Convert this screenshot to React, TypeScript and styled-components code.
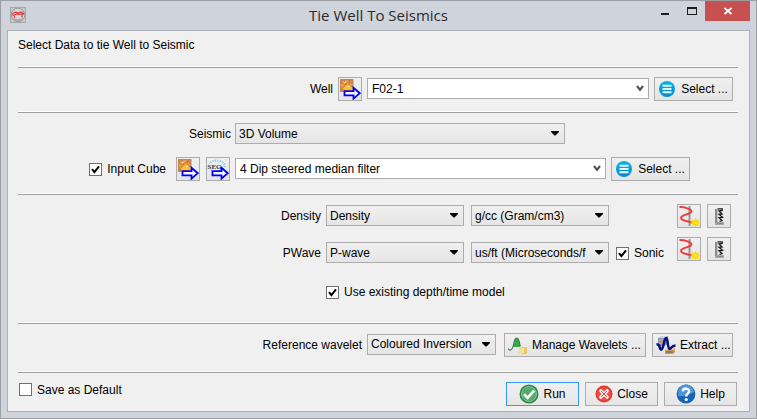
import React, { useId, useState } from "react";
import styled, { createGlobalStyle } from "styled-components";

const GlobalStyle = createGlobalStyle`
  *, *::before, *::after { box-sizing: border-box; }
  body {
    margin: 0;
    background: #cfd4dc;
    color: #000;
    font: 12px/16px "Liberation Sans", Arial, sans-serif;
  }
  button, input, select { font: inherit; color: inherit; margin: 0; }
`;

/* ---------- window frame ---------- */

const Frame = styled.div`
  display: flex;
  flex-direction: column;
  min-height: 100vh;
  padding: 0 6px 6px;
  border: 1px solid #9b9ea5;
  background: #cfd4dc;
`;

const TitleBar = styled.header`
  display: grid;
  grid-template-columns: 1fr auto 1fr;
  height: 29px;
`;

const AppIcon = styled.span`
  padding: 6px 0 0 3px;
  line-height: 0;
`;

const Title = styled.h1`
  margin: 0;
  font: 400 15px/29px "Open Sans", "Noto Sans", sans-serif;
  color: #2b2b2b;
  white-space: nowrap;
`;

const WindowButtons = styled.div`
  display: flex;
  justify-content: flex-end;
`;

const WindowButton = styled.button<{ $close?: boolean }>`
  display: flex;
  align-items: center;
  justify-content: center;
  width: ${(p) => (p.$close ? 45 : 27)}px;
  height: 20px;
  padding: 0;
  border: 0;
  background: ${(p) => (p.$close ? "#c75050" : "transparent")};
`;

const Panel = styled.form`
  flex: 1;
  padding: 0 11px 0 10px;
  border: 1px solid #acafb5;
  background: #f0f0f0;
`;

/* ---------- form layout ---------- */

const Intro = styled.p`
  margin: 0;
  padding: 6px 0 13px;
`;

const Section = styled.section<{ $pad: string }>`
  display: flex;
  flex-direction: column;
  gap: 12px;
  padding: ${(p) => p.$pad};
  border-top: 1px solid #a0a0a0;
  box-shadow: 0 -1px 0 #fff;
  margin-top: 1px;
`;

const Row = styled.div<{ $gap?: number }>`
  display: flex;
  align-items: center;
  gap: ${(p) => p.$gap ?? 5}px;
`;

const Group = styled(Row)`
  flex: 1;
  min-width: 0;
`;

const LabelCell = styled.div<{ $width: number }>`
  flex: 0 0 ${(p) => p.$width}px;
  display: flex;
  justify-content: flex-end;
  white-space: nowrap;
`;

const LogPanel = styled.div`
  display: flex;
  align-items: flex-start;
`;

const LogRows = styled.div`
  flex: 1;
  min-width: 0;
  display: flex;
  flex-direction: column;
  gap: 15px;
  padding-top: 1px;
`;

const LogTools = styled.div`
  display: grid;
  grid-template-columns: auto auto;
  gap: 9px 6px;
`;

const ModelRow = styled.div`
  padding: 8px 0 0 308px;
`;

const Footer = styled.div`
  display: flex;
  align-items: flex-start;
  justify-content: space-between;
`;

/* ---------- controls ---------- */

const Button = styled.button<{ $width: number; $gap?: number; $primary?: boolean; $center?: boolean }>`
  flex: none;
  width: ${(p) => p.$width}px;
  display: flex;
  align-items: center;
  justify-content: ${(p) => (p.$center ? "center" : "flex-start")};
  gap: ${(p) => p.$gap ?? 4}px;
  height: 24px;
  padding: 0 3px;
  border: 1px solid ${(p) => (p.$primary ? "#3399ff" : "#acacac")};
  background: linear-gradient(#f0f0f0, #e5e5e5);
  white-space: nowrap;
  svg { flex: none; }
`;

const IconButton = styled.button`
  flex: none;
  width: 24px;
  height: 24px;
  padding: 0;
  border: 1px solid #acacac;
  background: linear-gradient(#f0f0f0, #e5e5e5);
  line-height: 0;
`;

const ComboFrame = styled.div<{ $width: number; $grow?: boolean; $edit?: boolean }>`
  position: relative;
  flex: ${(p) => (p.$grow ? 1 : 0)} 1 ${(p) => p.$width}px;
  display: flex;
  min-width: 0;
  height: 21px;
  margin-bottom: 1px;
  border: 1px solid ${(p) => (p.$edit ? "#abadb3" : "#acacac")};
  background: ${(p) => (p.$edit ? "#fff" : "linear-gradient(#f0f0f0, #e5e5e5)")};
`;

const ComboArrow = styled.svg`
  position: absolute;
  right: 5px;
  top: 7px;
  pointer-events: none;
`;

const NativeSelect = styled.select`
  appearance: none;
  flex: 1;
  min-width: 0;
  padding: 0 22px 0 3px;
  border: 0;
  background: transparent;
  text-overflow: clip;
`;

const ComboInput = styled.input`
  flex: 1;
  min-width: 0;
  padding: 0 4px;
  border: 0;
  background: transparent;
`;

const ComboDrop = styled.button`
  flex: none;
  width: 16px;
  padding: 0;
  border: 0;
  background: transparent;
  line-height: 0;
`;

const CheckLabel = styled.label`
  display: inline-flex;
  align-items: center;
  gap: 5px;
  position: relative;
  white-space: nowrap;
`;

const CheckBox = styled.input`
  appearance: none;
  width: 13px;
  height: 13px;
  border: 1px solid #707070;
  background: #fff;
  & + svg { display: none; }
  &:checked + svg { display: block; }
`;

const CheckMark = styled.svg`
  position: absolute;
  left: 0;
  pointer-events: none;
`;

function Check({ text, on = false }: { text: string; on?: boolean }) {
  return (
    <CheckLabel>
      <CheckBox type="checkbox" defaultChecked={on} />
      <CheckMark width="13" height="13" viewBox="0 0 13 13">
        <path d="M3 6.2 5.4 9.2 10 3.4" fill="none" stroke="#000" strokeWidth="2" />
      </CheckMark>
      {text}
    </CheckLabel>
  );
}

function Select({ id, label, value, width }: { id?: string; label?: string; value: string; width: number }) {
  return (
    <ComboFrame $width={width}>
      <NativeSelect id={id} aria-label={label} defaultValue={value}>
        <option>{value}</option>
      </NativeSelect>
      <ComboArrow width="8" height="5" viewBox="0 0 8 5">
        <path d="M0 0H8V1L4.5 4.5H3.5L0 1Z" fill="#000" />
      </ComboArrow>
    </ComboFrame>
  );
}

function EditCombo({ id, label, initial, width, grow }: { id?: string; label?: string; initial: string; width: number; grow?: boolean }) {
  const [value, setValue] = useState(initial);
  return (
    <ComboFrame $width={width} $grow={grow} $edit>
      <ComboInput id={id} aria-label={label} value={value} onChange={(e) => setValue(e.target.value)} />
      <ComboDrop type="button" aria-label="Show list">
        <svg width="8" height="7" viewBox="0 0 8 7">
          <path d="M1 1 4 4.8 7 1" fill="none" stroke="#505050" strokeWidth="2.1" />
        </svg>
      </ComboDrop>
    </ComboFrame>
  );
}

/* ---------- icons ---------- */

const BlueArrow = () => (
  <path d="M5.5 13.2H14.5V9.8L20.8 15.2 14.5 20.6V17.4H5.5Z" fill="#f4f4ff" stroke="#0000f5" strokeWidth="1.8" />
);

const ImportIcon = () => (
  <svg width="22" height="22" viewBox="0 0 22 22">
    <rect x="1" y="1" width="13.5" height="13" fill="#c98252" />
    <path d="M3 3 8 2 13 4 14 13H5L2 8Z" fill="#eaa04c" />
    <path d="M4 9 9 7 14 10V14H5Z" fill="#ffc21c" />
    <path d="M2 4Q5 8 8 5T13 6M5 2 7 6 4 10M11 2 10 6 13 9" fill="none" stroke="#b5704a" strokeWidth="0.8" />
    <path d="M5 5 7 4M9 9 11 8" stroke="#ffe6a0" strokeWidth="1.3" />
    <BlueArrow />
  </svg>
);

const SegIcon = () => (
  <svg width="22" height="22" viewBox="0 0 22 22">
    <ellipse cx="9.5" cy="8" rx="8" ry="6" fill="#e7f2f8" />
    <ellipse cx="9.5" cy="8" rx="8" ry="5.5" fill="none" stroke="#8cc3df" strokeWidth="2" strokeDasharray="1.2 1.3" />
    <rect x="1" y="5.5" width="14" height="6" fill="#e6eef2" />
    <text x="0.5" y="11.3" fontFamily="Liberation Serif, serif" fontWeight="700" fontSize="7" fill="#333">SEG</text>
    <BlueArrow />
  </svg>
);

const ListIcon = () => {
  const id = useId();
  return (
    <svg width="16" height="16" viewBox="0 0 16 16">
      <defs>
        <linearGradient id={id} x2="0" y2="1">
          <stop stopColor="#08b4e4" />
          <stop offset="1" stopColor="#0789cf" />
        </linearGradient>
      </defs>
      <circle cx="8" cy="8" r="8" fill={`url(#${id})`} />
      <path d="M3.5 4.8H12.5M3.5 8H12.5M3.5 11.2H12.5" stroke="#e4f8ff" strokeWidth="1.9" />
    </svg>
  );
};

const CurveIcon = () => (
  <svg width="22" height="22" viewBox="0 0 22 22">
    <path d="M11.5 1V21" stroke="#969696" strokeWidth="2" />
    <path d="M1.5 2C7 2 13.5 4 13.5 6.5S3 10 3 12.7 8 16 14 17.5" fill="none" stroke="#f03c3c" strokeWidth="1.9" />
    <path d="M17.5 12.8 18.7 15.2 21.3 14 20.2 16.6 22 17.7 20.2 18.8 21.3 21.4 18.7 20.2 17.5 22 16.2 20.2 13.6 21.4 14.8 18.8 12.3 17.7 14.8 16.6 13.6 14 16.2 15.2Z" fill="#ffdc00" />
    <circle cx="17.5" cy="17.7" r="1" fill="#fff05a" />
  </svg>
);

const LogIcon = () => (
  <svg width="22" height="22" viewBox="0 0 22 22">
    <path d="M7 4H9.5V17H16V20H7Z" fill="#a9a9a9" />
    <path d="M8 4V18" stroke="#858585" strokeWidth="1.6" />
    <path d="M9 18.5H15" stroke="#8b8b8b" />
    <path d="M9.5 3.8H14.2V5.5L11 6 14 9 11 9.3 14.5 12.3 11 12.8 14 15.5 11.5 16.5" fill="none" stroke="#1b1b1b" strokeWidth="1.3" />
  </svg>
);

const WaveletIcon = () => (
  <svg width="20" height="20" viewBox="0 0 20 20">
    <path d="M5 12C7 9 6 3 9 3S11 9 13 12Z" fill="#31ad4a" />
    <path d="M0 13.5C2 16.5 4.5 15 5.5 10S7 3 9 3 11.5 7 12 11 14 15.5 16 13" fill="none" stroke="#477a55" strokeWidth="1.2" />
    <path d="M11 12 14 10.5V18L11 19Z" fill="#f6dc8b" />
    <path d="M14 12H19V18.5L14 19.5Z" fill="#edc766" />
    <path d="M15 13V18" stroke="#fff0b4" strokeWidth="1.5" />
  </svg>
);

const ExtractIcon = () => (
  <svg width="20" height="20" viewBox="0 0 20 20">
    <path d="M2 3 6 1H12V9L8 11H2Z" fill="#8194b3" />
    <path d="M2 3 6 1H12L9 3Z" fill="#ced8e7" />
    <path d="M3 5H8M3 8H8" stroke="#e3a37c" strokeWidth="1.3" />
    <path d="M9 15 12 13H19V17L17 19H9Z" fill="#c99961" />
    <path d="M9 15 12 13H19L17 15Z" fill="#f2d9a2" />
    <path d="M10 17H17" stroke="#7a563e" />
    <path d="M0.5 9.5C2.5 9 3 10 4 13S6.5 14.5 7.5 10 9 3 10.5 3 11.5 14 13.5 14 15 10.5 19.5 10.5" fill="none" stroke="#08127f" strokeWidth="2.5" />
  </svg>
);

const RunIcon = () => (
  <svg width="20" height="20" viewBox="0 0 20 20">
    <circle cx="10" cy="10" r="9.5" fill="#278b48" />
    <circle cx="10" cy="10" r="7.5" fill="#54a96b" stroke="#a8d6b4" strokeWidth="0.7" />
    <path d="M5 10.2 8.6 13.8 15.2 6.6" fill="none" stroke="#fff" strokeWidth="2.6" />
  </svg>
);

const CloseIcon = () => (
  <svg width="18" height="18" viewBox="0 0 18 18">
    <circle cx="9" cy="9" r="8.5" fill="#e5392f" />
    <circle cx="9" cy="9" r="6.8" fill="#ed5146" />
    <path d="M5.8 5.8 12.2 12.2M12.2 5.8 5.8 12.2" stroke="#fff" strokeWidth="3.2" strokeLinecap="round" />
    <path d="M6 6 12 12M12 6 6 12" stroke="#e5463c" strokeWidth="1" />
  </svg>
);

const HelpIcon = () => (
  <svg width="20" height="20" viewBox="0 0 20 20">
    <circle cx="10" cy="10" r="9.4" fill="#1764b5" />
    <path d="M2 9A8 8 0 0 1 18 8Q10 13 2 12Z" fill="#4c96db" />
    <path d="M6.8 7.4C7 3.6 13.3 3.8 13.1 7.4 13 9.8 10.2 9.6 10.2 12.4" fill="none" stroke="#fff" strokeWidth="2.5" />
    <circle cx="10.2" cy="15.6" r="1.6" fill="#fff" />
  </svg>
);

const AppMark = () => (
  <svg width="18" height="18" viewBox="0 0 18 18">
    <rect x="0.5" y="0.5" width="15" height="15" fill="#c9c9c9" stroke="#a9a9a9" />
    <circle cx="8" cy="8" r="6.8" fill="#d6d6d6" stroke="#999" />
    <path d="M2 10.5Q8 14 14 10.5Q11 15 8 15T2 10.5Z" fill="#a7aaa8" />
    <path d="M2 7.3 5 5.2 8 5.8 11 5 14 6.6M2.5 8.6 7 7 10 7.4 14 7M4.5 7.5V11M12 6V10.5" fill="none" stroke="#e24444" strokeWidth="1.3" />
  </svg>
);

/* ---------- dialog ---------- */

const SelectButton = () => (
  <Button type="button" $width={79} $gap={6} $center>
    <ListIcon />
    Select ...
  </Button>
);

export default function App() {
  return (
    <>
      <GlobalStyle />
      <Frame>
        <TitleBar>
          <AppIcon>
            <AppMark />
          </AppIcon>
          <Title>Tie Well To Seismics</Title>
          <WindowButtons>
            <WindowButton type="button" aria-label="Minimize">
              <svg width="10" height="10" viewBox="0 0 10 10">
                <path d="M1 8H9" stroke="#1e1e1e" strokeWidth="2" />
              </svg>
            </WindowButton>
            <WindowButton type="button" aria-label="Maximize">
              <svg width="10" height="8" viewBox="0 0 10 8">
                <path d="M0 0H10V8H0ZM1 2V7H9V2Z" fill="#1e1e1e" fillRule="evenodd" />
              </svg>
            </WindowButton>
            <WindowButton type="button" aria-label="Close window" $close>
              <svg width="8" height="8" viewBox="0 0 8 8">
                <path d="M0.5 1 7.5 7M7.5 1 0.5 7" stroke="#fff" strokeWidth="1.9" />
              </svg>
            </WindowButton>
          </WindowButtons>
        </TitleBar>

        <Panel onSubmit={(e: React.FormEvent) => e.preventDefault()}>
          <Intro>Select Data to tie Well to Seismic</Intro>

          <Section $pad="9px 5px 10px 0">
            <Row>
              <LabelCell $width={315}>
                <label htmlFor="well">Well</label>
              </LabelCell>
              <IconButton type="button" aria-label="Import well">
                <ImportIcon />
              </IconButton>
              <EditCombo id="well" initial="F02-1" width={282} grow />
              <SelectButton />
            </Row>
          </Section>

          <Section $pad="10px 5px 12px 0">
            <Row $gap={4}>
              <LabelCell $width={213}>
                <label htmlFor="seismic">Seismic</label>
              </LabelCell>
              <Select id="seismic" value="3D Volume" width={330} />
            </Row>
            <Row $gap={10}>
              <LabelCell $width={148}>
                <Check text="Input Cube" on />
              </LabelCell>
              <Group>
                <Row $gap={6}>
                  <IconButton type="button" aria-label="Import cube">
                    <ImportIcon />
                  </IconButton>
                  <IconButton type="button" aria-label="Import SEG-Y">
                    <SegIcon />
                  </IconButton>
                </Row>
                <EditCombo label="Input Cube" initial="4 Dip steered median filter" width={371} />
                <SelectButton />
              </Group>
            </Row>
          </Section>

          <Section $pad="9px 7px 19px 0">
            <LogPanel>
              <LogRows>
                <Row>
                  <LabelCell $width={303}>
                    <label htmlFor="density">Density</label>
                  </LabelCell>
                  <Group $gap={7}>
                    <Select id="density" value="Density" width={138} />
                    <Select label="Density unit" value="g/cc (Gram/cm3)" width={138} />
                  </Group>
                </Row>
                <Row>
                  <LabelCell $width={303}>
                    <label htmlFor="pwave">PWave</label>
                  </LabelCell>
                  <Group $gap={7}>
                    <Select id="pwave" value="P-wave" width={138} />
                    <Select label="PWave unit" value="us/ft (Microseconds/feet)" width={138} />
                    <Check text="Sonic" on />
                  </Group>
                </Row>
              </LogRows>
              <LogTools>
                <IconButton type="button" aria-label="Create density log">
                  <CurveIcon />
                </IconButton>
                <IconButton type="button" aria-label="View density log">
                  <LogIcon />
                </IconButton>
                <IconButton type="button" aria-label="Create P-wave log">
                  <CurveIcon />
                </IconButton>
                <IconButton type="button" aria-label="View P-wave log">
                  <LogIcon />
                </IconButton>
              </LogTools>
            </LogPanel>
            <ModelRow>
              <Check text="Use existing depth/time model" on />
            </ModelRow>
          </Section>

          <Section $pad="9px 5px 14px 0">
            <Row>
              <LabelCell $width={344}>
                <label htmlFor="wavelet">Reference wavelet</label>
              </LabelCell>
              <Group $gap={8}>
                <Select id="wavelet" value="Coloured Inversion" width={129} />
                <Row $gap={6}>
                  <Button type="button" $width={142}>
                    <WaveletIcon />
                    Manage Wavelets ...
                  </Button>
                  <Button type="button" $width={81}>
                    <ExtractIcon />
                    Extract ...
                  </Button>
                </Row>
              </Group>
            </Row>
          </Section>

          <Section $pad="9px 1px 5px 1px">
            <Footer>
              <Check text="Save as Default" />
              <Row $gap={6}>
                <Button type="submit" $width={73} $primary $center>
                  <RunIcon />
                  Run
                </Button>
                <Button type="button" $width={73} $center>
                  <CloseIcon />
                  Close
                </Button>
                <Button type="button" $width={73} $center>
                  <HelpIcon />
                  Help
                </Button>
              </Row>
            </Footer>
          </Section>
        </Panel>
      </Frame>
    </>
  );
}
